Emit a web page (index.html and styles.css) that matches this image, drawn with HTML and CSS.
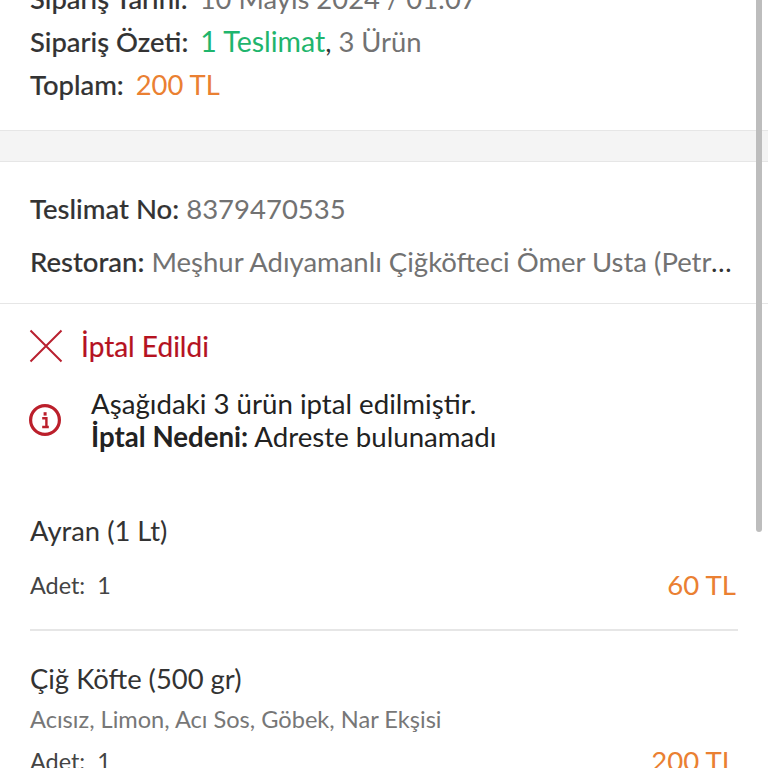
FILE: index.html
```html
<!DOCTYPE html>
<html lang="tr">
<head>
  <meta charset="UTF-8">
  <title>Sipariş Detayı</title>
  <link rel="stylesheet" href="styles.css">
</head>
<body>
  <div class="page">
    <section class="ozet">
      <div class="satir"><b>Sipariş Tarihi:</b><span class="gri">10 Mayıs 2024 / 01:07</span></div>
      <div class="satir"><b>Sipariş Özeti:</b><span class="gri"><span class="yesil">1 Teslimat</span><span class="koyu">,</span> 3 Ürün</span></div>
      <div class="satir"><b>Toplam:</b><span class="turuncu">200 TL</span></div>
    </section>

    <div class="ayrac"></div>

    <section class="teslimat">
      <div class="teslimat-satir"><b>Teslimat No:</b> <span class="gri">8379470535</span></div>
      <div class="teslimat-satir kes"><b>Restoran:</b> <span class="gri">Meşhur Adıyamanlı Çiğköfteci Ömer Usta (Petrol Ofisi)</span></div>
    </section>

    <section class="iptal">
      <div class="iptal-baslik">
        <svg class="ikon-x" width="34" height="34" viewBox="0 0 34 34" fill="none" stroke="#b9202f" stroke-width="2">
          <path d="M1.5 1.5 L32.5 32.5 M32.5 1.5 L1.5 32.5"/>
        </svg>
        <span>İptal Edildi</span>
      </div>
      <div class="iptal-not">
        <svg class="ikon-i" width="32" height="32" viewBox="0 0 32 32" fill="none">
          <circle cx="16" cy="16" r="14.4" stroke="#bb1f2b" stroke-width="3.2"/>
          <path d="M13.2 14.2 H17.4 V22.6 M13.2 23 H19.8" stroke="#bb1f2b" stroke-width="2.4"/>
          <rect x="14.6" y="8.2" width="3" height="3.4" fill="#bb1f2b"/>
        </svg>
        <p>Aşağıdaki 3 ürün iptal edilmiştir.<br><b>İptal Nedeni:</b> Adreste bulunamadı</p>
      </div>
    </section>

    <section class="urunler">
      <div class="urun">
        <div class="urun-ad">Ayran (1 Lt)</div>
        <div class="urun-alt"><span>Adet:&nbsp; 1</span><span class="fiyat">60 TL</span></div>
      </div>
      <div class="urun">
        <div class="urun-ad">Çiğ Köfte (500 gr)</div>
        <div class="urun-not">Acısız, Limon, Acı Sos, Göbek, Nar Ekşisi</div>
        <div class="urun-alt sonra-not"><span>Adet:&nbsp; 1</span><span class="fiyat">200 TL</span></div>
      </div>
    </section>
  </div>
  <div class="kaydirma"></div>
</body>
</html>
```

FILE: styles.css
```css
html, body {
  margin: 0;
  height: 768px;
  overflow: hidden;
  background: #fff;
}
body {
  font-family: Lato, "Noto Sans", sans-serif;
  color: #333;
  position: relative;
}
b {
  font-weight: 500;
  -webkit-text-stroke: 0.15px currentColor;
}
.gri {
  color: #727272;
}
.koyu {
  color: #333;
}
.yesil {
  color: #1fb56d;
  font-size: 28.5px;
}
.turuncu, .fiyat {
  color: #ea8032;
}

.ozet {
  margin-top: -23px;
  padding: 0 30px 24px;
  font-size: 27.4px;
}
.satir {
  display: flex;
  gap: 12px;
  height: 43px;
  line-height: 43px;
  white-space: nowrap;
}

.ayrac {
  height: 30px;
  background: #f4f4f4;
  border-top: 1px solid #e6e6e6;
  border-bottom: 1px solid #e6e6e6;
}

.teslimat {
  padding: 26px 30px 20px;
  border-bottom: 1px solid #e6e6e6;
  font-size: 27.5px;
}
.teslimat-satir {
  height: 53px;
  line-height: 42px;
  width: 704px;
}
.kes {
  height: 42px;
  overflow: hidden;
  white-space: nowrap;
  text-overflow: ellipsis;
}

.iptal {
  padding: 25px 29px 0;
}
.iptal-baslik {
  display: flex;
  align-items: center;
  gap: 18px;
  color: #b5121f;
  font-size: 28px;
  -webkit-text-stroke: 0.2px currentColor;
}
.iptal-not {
  display: flex;
  align-items: center;
  gap: 30px;
  margin-top: 24px;
  color: #222;
  font-size: 27.65px;
}
.iptal-not p {
  margin: 0;
  line-height: 33px;
}
.iptal-not b {
  font-weight: 700;
  -webkit-text-stroke: 0;
}

.urunler {
  padding: 0 30px;
  margin-top: 61px;
}
.urun {
  width: 708px;
}
.urun + .urun {
  border-top: 2px solid #e6e6e6;
  margin-top: 27px;
  padding-top: 31px;
}
.urun-ad {
  font-size: 27.4px;
  line-height: 34px;
}
.urun-not {
  color: #777;
  font-size: 23.6px;
  line-height: 30px;
  margin-top: 8px;
}
.urun-alt {
  display: flex;
  justify-content: space-between;
  align-items: center;
  margin-top: 20px;
  color: #444;
  font-size: 23.4px;
  line-height: 34px;
}
.sonra-not {
  margin-top: 10px;
}
.fiyat {
  font-size: 27.6px;
  margin-right: 2px;
}

.kaydirma {
  position: absolute;
  top: 0;
  left: 756px;
  width: 6px;
  height: 532px;
  background: #bdbdbd;
  border-radius: 0 0 3px 3px;
}
```
